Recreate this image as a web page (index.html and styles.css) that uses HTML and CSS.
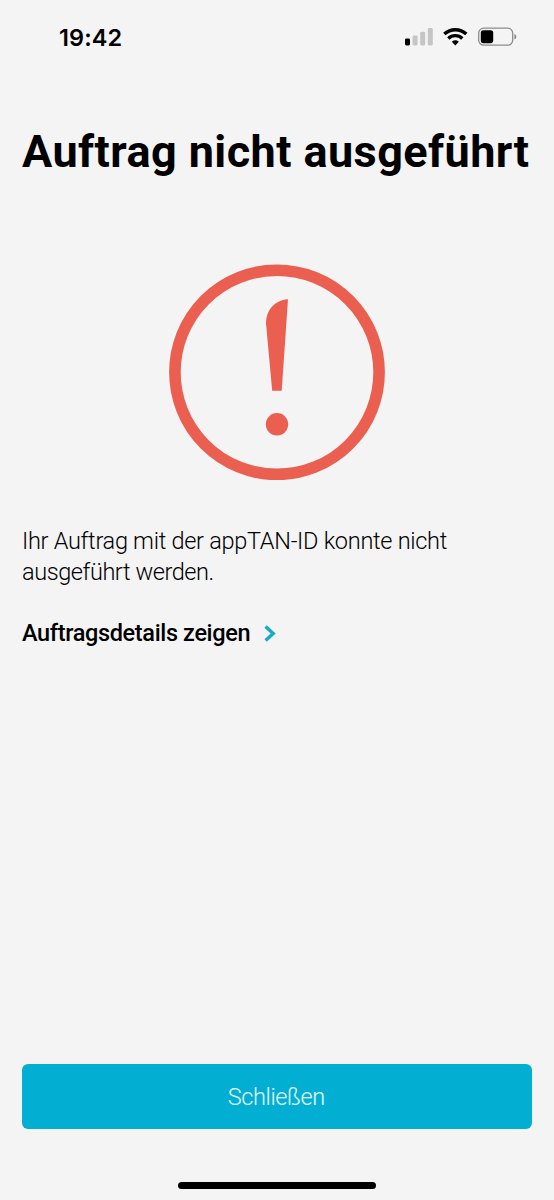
FILE: index.html
```html
<!DOCTYPE html>
<html lang="de">
<head>
<meta charset="utf-8">
<meta name="viewport" content="width=device-width, initial-scale=1">
<title>Auftrag nicht ausgeführt</title>
<link rel="stylesheet" href="styles.css">
</head>
<body>
<div class="screen">
  <header class="status-bar">
    <span class="time">19:42</span>
    <svg class="status-icons" width="114" height="22" viewBox="0 0 114 22" aria-hidden="true">
      <rect x="1" y="12.5" width="5" height="7" rx="1.4"/>
      <g fill="#c5c5c5">
        <rect x="8.6" y="9.5" width="5" height="10" rx="1.4"/>
        <rect x="16.2" y="5.8" width="5" height="13.7" rx="1.4"/>
        <rect x="23.8" y="2" width="5" height="17.5" rx="1.4"/>
      </g>
      <g fill="none" stroke="#000" stroke-width="3.4">
        <path d="M40.3 8.1a16 16 0 0 1 22 0"/>
        <path d="M44.3 12.4a10.3 10.3 0 0 1 14 0"/>
      </g>
      <path d="M47.8 15.8a5.4 5.4 0 0 1 7 0L51.3 19.5z"/>
      <rect x="74.7" y="2.2" width="34" height="17" rx="5" fill="none" stroke="#8c8c8c" stroke-width="1.3"/>
      <rect x="76.8" y="4.2" width="12.4" height="13" rx="2.6"/>
      <path d="M110.4 8v5.5q2-.8 2-2.75T110.4 8z" fill="#8c8c8c"/>
    </svg>
  </header>
  <main class="content">
    <h1 class="title">Auftrag nicht ausgeführt</h1>
    <svg class="alert-icon" width="216" height="216" viewBox="0 0 216 216" aria-hidden="true">
      <circle cx="108" cy="108.3" r="102.1" fill="none" stroke="#eb5f50" stroke-width="11.6"/>
      <path d="M119 35.2C105 36 96.8 47 97 59.5L103.2 126.7h9.5z" fill="#eb5f50"/>
      <circle cx="108" cy="160.3" r="11.2" fill="#eb5f50"/>
    </svg>
    <p class="message"><span class="line-one">Ihr Auftrag mit der appTAN-ID konnte nicht</span><br><span class="line-two">ausgeführt werden.</span></p>
    <a class="details"><span>Auftragsdetails zeigen</span>
      <svg class="chevron" width="12" height="18" viewBox="0 0 12 18" aria-hidden="true"><path d="M1.6 1.4l7.6 7.1-7.6 7.1" fill="none" stroke="#16abc8" stroke-width="3.4"/></svg>
    </a>
  </main>
  <footer class="footer">
    <button class="close-button" type="button">Schließen</button>
    <div class="home-indicator"></div>
  </footer>
</div>
</body>
</html>
```
FILE: styles.css
```css
* { box-sizing: border-box; }
body { margin: 0; background: #f4f4f4; color: #000; font-family: Roboto, sans-serif; }
.screen { height: 1200px; display: flex; flex-direction: column; background: #f4f4f4; }
.status-bar { height: 74px; padding: 0 36px 0 59px; display: flex; justify-content: space-between; align-items: center; }
.time { padding-top: 1px; font: 600 23.5px/28px Inter, sans-serif; letter-spacing: 0.1px; }
.status-icons { display: block; }
.content { flex: 1; padding: 51px 22px 0; display: flex; flex-direction: column; }
.title { margin: 0; font-size: 45px; line-height: 54px; font-weight: 700; letter-spacing: 0.43px; white-space: nowrap; }
.alert-icon { display: block; margin: 85px auto 0; }
.message { margin: 46px 0 0; font-size: 23.5px; line-height: 31px; font-weight: 350; white-space: nowrap; }
.line-one { letter-spacing: -0.28px; }
.line-two { letter-spacing: -0.42px; }
.details { display: flex; align-items: center; gap: 14px; margin-top: 30px; font-size: 23.5px; line-height: 31px; font-weight: 500; letter-spacing: -0.36px; white-space: nowrap; }
.chevron { display: block; }
.footer { height: 136px; padding: 0 22px; display: flex; flex-direction: column; align-items: center; }
.close-button { width: 100%; height: 65px; border: 0; border-radius: 6px; padding: 2px 1.5px 0 0; background: #02afd3; color: #e6fafd; font: 300 23.5px/31px Roboto, sans-serif; letter-spacing: -0.4px; }
.home-indicator { width: 198px; height: 7px; margin-top: 53px; border-radius: 4px; background: #000; }
```
